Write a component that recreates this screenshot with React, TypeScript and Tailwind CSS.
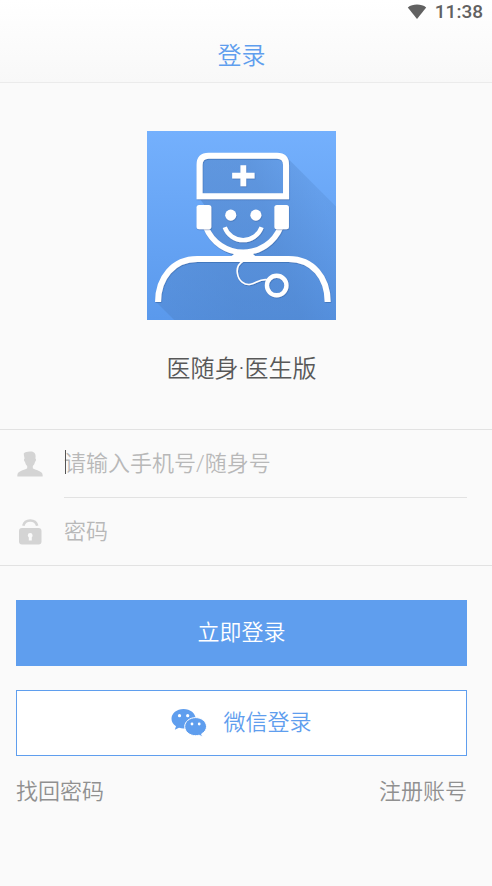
function WifiIcon() {
  return (
    <svg viewBox="0 0 20 16" className="h-4 w-5" fill="#616161" aria-hidden="true">
      <path d="M10 15 .8 3.4C3.400 1.500 6.500.6 10 .6s6.600.9 9.200 2.800z" />
    </svg>
  );
}

function DoctorLogo() {
  return (
    <svg viewBox="0 0 188 188" className="size-[189px]" role="img" aria-label="医随身">
      <defs>
        <linearGradient id="sky" x1="0" y1="0" x2="0" y2="1">
          <stop offset="0" stopColor="#74b0fd" />
          <stop offset="1" stopColor="#5a99ec" />
        </linearGradient>
        <linearGradient id="shade" gradientUnits="userSpaceOnUse" x1="8" y1="170" x2="188" y2="110">
          <stop offset="0" stopColor="#4878b8" stopOpacity="0.3" />
          <stop offset="0.4" stopColor="#4878b8" stopOpacity="0.42" />
          <stop offset="0.7" stopColor="#4878b8" stopOpacity="0.42" />
          <stop offset="1" stopColor="#4878b8" stopOpacity="0.2" />
        </linearGradient>
        <filter id="drop" x="-5%" y="-5%" width="110%" height="110%">
          <feDropShadow dx="0.5" dy="0.8" stdDeviation="0.6" floodColor="#2f5f9f" floodOpacity="0.6" />
        </filter>
      </defs>
      <rect width="188" height="188" fill="url(#sky)" />
      <path d="M52 25h86l50 50v113H27L9 170q2-43 41-43h46q-27-5-37-29V76l-7-9z" fill="url(#shade)" />
      <g fill="none" stroke="#fff" filter="url(#drop)">
        <path d="M52.300 65V33.700q0-9 9-9h68q9 0 9 9V65z" strokeWidth="6" />
        <path d="M95.800 34v21M84.700 44.500H107" strokeWidth="5.700" />
        <path d="M58.700 96a40 40 0 0 0 74 0" strokeWidth="5.700" />
        <path d="M77.300 95.700a19.500 19.500 0 0 0 36.700 0" strokeWidth="4.300" />
        <path d="M11 170C11 146 26 127.300 50 127.300h91C165 127.300 179.700 146 179.700 170" strokeWidth="6" />
        <path d="M96 129c-5 3-7 8-6 13 1 7 7 11.500 13 10.500 6-1 9-6 17-4.500" strokeWidth="1.600" />
        <circle cx="129" cy="153.700" r="9.700" strokeWidth="4.300" />
      </g>
      <path d="M81 126q5-2 6-5h18q1 3 6 5z" fill="#fff" />
      <g fill="#fff" filter="url(#drop)">
        <rect x="49.300" y="73.700" width="14.700" height="24" rx="2.500" />
        <rect x="126.700" y="73.700" width="14.500" height="24" rx="2.500" />
        <circle cx="83.300" cy="83.700" r="5.500" />
        <circle cx="108.300" cy="83.700" r="5.500" />
      </g>
    </svg>
  );
}

function UserIcon() {
  return (
    <svg viewBox="0 0 26 26" className="size-6.5" fill="#d4d4d4" aria-hidden="true">
      <path d="M6.800 2.500C8 .8 10 .6 13 .4c3.500-.2 5.700 1.600 5.600 5 0 .8-.2 1.600-.2 2.100.9.200.8 2.600-.4 3.500-.4 2-1.300 3-2.200 4v2.200c1.200 1.700 8.200 2.200 9.500 5.300.3.900.4 1.900.4 3H.3c0-1.100.1-2.100.4-3 1.300-3.100 8.300-3.600 9.500-5.300V15c-.9-1-1.800-2-2.200-4-1.200-.9-1.300-3.300-.4-3.500-.3-1.500-.9-3.200-.8-5z" />
    </svg>
  );
}

function LockIcon() {
  return (
    <svg viewBox="0 0 26 26" className="size-6.5" aria-hidden="true">
      <path d="M6.300 6.800c1.700-7 12.200-7 13.900 0" fill="none" stroke="#d4d4d4" strokeWidth="2.600" />
      <path
        fill="#d4d4d4"
        fillRule="evenodd"
        d="M5 9h16.500a3 3 0 0 1 3 3v10.500a3 3 0 0 1-3 3H5a3 3 0 0 1-3-3V12a3 3 0 0 1 3-3zm8.200 5a2.400 2.400 0 0 0-2.400 2.400c0 .9.500 1.400 1 1.900V21.500h3v-3.200c.5-.5.800-1 .8-1.900a2.400 2.400 0 0 0-2.400-2.400z"
      />
    </svg>
  );
}

function WechatIcon() {
  return (
    <svg viewBox="0 0 36 30" className="h-7.5 w-9" aria-hidden="true">
      <path
        fill="#5f9eee"
        d="M12.500 1C5.800 1 .5 5.300.5 10.800c0 3.100 1.700 5.700 4.500 7.500l-1.200 3.500 4.200-2c1.400.4 2.900.7 4.500.7 6.800 0 12.100-4.300 12.100-9.700S19.300 1 12.500 1z"
      />
      <path
        fill="#5f9eee"
        stroke="#fff"
        d="M24.600 9.600c-6 0-10.900 4-10.900 9s4.900 9.100 10.900 9.100c1.200 0 2.400-.2 3.500-.5l3.400 1.700-.9-3c3-1.700 4.900-4.300 4.900-7.300 0-5-4.900-9-10.900-9z"
      />
      <g fill="#fff">
        <circle cx="8.500" cy="7.700" r="1.600" />
        <circle cx="16.700" cy="7.700" r="1.600" />
        <circle cx="21" cy="16" r="1.400" />
        <circle cx="28.200" cy="16" r="1.400" />
      </g>
    </svg>
  );
}

export default function App() {
  return (
    <div className="min-h-screen bg-[#fafafa] font-[Roboto,'Noto_Sans_CJK_SC',sans-serif] text-[22px] leading-8 font-[350]">
      <header className="border-b border-[#ebebeb] bg-linear-to-b from-white to-[#f8f8f8]">
        <div className="flex h-6 items-center justify-end gap-2 pr-[9px] text-[19px] font-medium text-[#616161]">
          <WifiIcon />
          <span>11:38</span>
        </div>
        <h1 className="pt-4 pr-[9px] pb-2.5 text-center text-2xl leading-8 font-[350] text-[#5f9eee]">登录</h1>
      </header>

      <main>
        <div className="flex flex-col items-center pt-12 pr-[9px] pb-[43px]">
          <DoctorLogo />
          <p className="mt-8 text-2xl leading-[34px] text-[#585858]">医随身·医生版</p>
        </div>

        <form onSubmit={(e) => e.preventDefault()}>
          <div className="border-y border-[#e2e2e2] pr-[25px] pl-[17px]">
            <div className="flex items-center">
              <label htmlFor="account" aria-label="手机号/随身号">
                <UserIcon />
              </label>
              <div className="relative ml-[21px] flex-1 border-b border-[#e2e2e2]">
                <span className="absolute top-5 left-px h-6 w-px bg-[#555]" />
                <input
                  id="account"
                  type="text"
                  placeholder="请输入手机号/随身号"
                  className="block h-[67px] w-full bg-transparent text-[#606060] outline-none placeholder:text-[#b8b8b8]"
                />
              </div>
            </div>
            <div className="flex items-center">
              <label htmlFor="password" aria-label="密码">
                <LockIcon />
              </label>
              <input
                id="password"
                type="password"
                placeholder="密码"
                className="ml-[21px] h-[67px] min-w-0 flex-1 bg-transparent text-[#606060] outline-none placeholder:text-[#b8b8b8]"
              />
            </div>
          </div>

          <div className="flex flex-col gap-6 pt-[34px] pr-[25px] pl-4">
            <button type="submit" className="h-[66px] bg-[#5f9eee] text-white">
              立即登录
            </button>
            <button
              type="button"
              className="flex h-[66px] items-center justify-center gap-4 border border-[#5f9eee] bg-white text-[#5f9eee]"
            >
              <WechatIcon />
              微信登录
            </button>
          </div>
        </form>

        <nav className="flex justify-between pt-5 pr-[25px] pl-4 text-[#909090]">
          <a href="#recover">找回密码</a>
          <a href="#register">注册账号</a>
        </nav>
      </main>
    </div>
  );
}
